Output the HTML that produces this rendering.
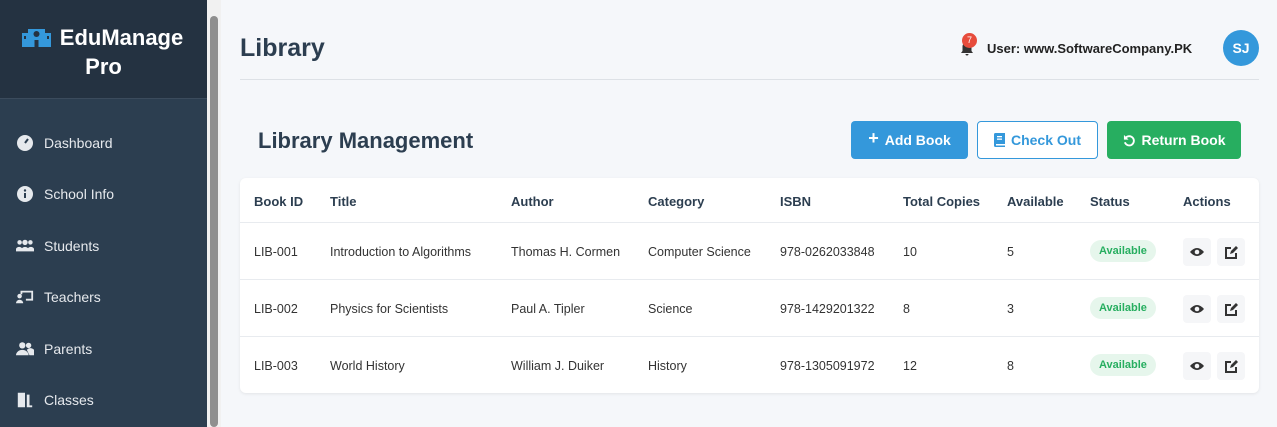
<!DOCTYPE html>
<html><head><meta charset="utf-8"><style>
*{box-sizing:border-box;margin:0;padding:0}
body{width:1277px;height:427px;overflow:hidden;background:#f5f7fa;font-family:"Liberation Sans",sans-serif;position:relative;color:#2c3e50}
.sb{position:absolute;left:0;top:0;width:207px;height:427px;background:#2c3e50}
.sbh{height:99px;background:#243241;border-bottom:1px solid #3b4b5c;color:#fff;font-weight:bold;font-size:22px;text-align:center;padding-top:23px;line-height:29px}
.menu{position:absolute;left:0;top:117px;width:207px}
.mi{height:51.5px;display:flex;align-items:center;padding-left:16px;color:#e6e9ed;font-size:14px}
.mi svg{width:18px;height:18px;margin-right:10px}
.scr{position:absolute;left:207px;top:0;width:14px;height:427px;background:#f1f1f1}
.thumb{position:absolute;left:210px;top:16px;width:8px;height:411px;background:#8f8f8f;border-radius:4px}
h1{position:absolute;left:240px;top:34px;font-size:25px;font-weight:bold}
.hr{position:absolute;left:240px;top:79px;width:1019px;height:1px;background:#dde1e6}
.user{position:absolute;left:987px;top:41px;font-size:13px;font-weight:bold;color:#222}
.av{position:absolute;left:1223px;top:30px;width:36px;height:36px;border-radius:50%;background:#3498db;color:#fff;font-weight:bold;font-size:14px;text-align:center;line-height:36px}
.badge{position:absolute;left:962px;top:33px;width:15px;height:15px;border-radius:50%;background:#e74c3c;color:#fff;font-size:9px;text-align:center;line-height:15px}
h2{position:absolute;left:258px;top:128px;font-size:22px;font-weight:bold}
.btn{position:absolute;top:121px;height:38px;border-radius:4px;font-size:14px;font-weight:bold;display:flex;align-items:center;justify-content:center;gap:6px}
.card{position:absolute;left:240px;top:178px;width:1019px;height:215px;background:#fff;border-radius:6px;box-shadow:0 1px 3px rgba(0,0,0,.08)}
.row{position:absolute;left:0;width:1019px;font-size:12.5px;color:#333}
.row span{position:absolute}
.hd{top:0;height:45px;border-bottom:1px solid #e8ebef;font-weight:bold;font-size:13px;color:#2c3e50}
.hd span{top:16px}
.r{height:57px;border-bottom:1px solid #e8ebef}
.r span{top:22px}
.pill{background:#e6f6ec;color:#27ae60;font-weight:bold;font-size:11px;border-radius:12px;padding:5px 9px;top:17px!important}
.ib{width:28px;height:28px;background:#f5f6f8;border-radius:4px;top:15px!important;display:flex;align-items:center;justify-content:center}
</style></head><body>
<div class="sb">
<div class="sbh"><svg style="position:absolute;left:22px;top:25px" width="29" height="22" viewBox="0 0 29 22"><path fill="#3498db" d="M6 4h17v18H6zM0 8h6v14H0zM23 8h6v14h-6z"/><circle cx="14.5" cy="9" r="3" fill="#243241"/><rect x="12.5" y="15" width="4" height="7" fill="#243241"/><rect x="2" y="11" width="2" height="3" fill="#243241"/><rect x="25" y="11" width="2" height="3" fill="#243241"/></svg><span style="padding-left:36px">EduManage</span><br>Pro</div>
<div class="menu">
<div class="mi"><svg viewBox="0 0 18 18"><circle cx="9" cy="9" r="8" fill="#e6e9ed"/><path d="M9 9l3-4" stroke="#2c3e50" stroke-width="2"/></svg>Dashboard</div>
<div class="mi"><svg viewBox="0 0 18 18"><circle cx="9" cy="9" r="8" fill="#e6e9ed"/><rect x="8" y="8" width="2" height="5" fill="#2c3e50"/><circle cx="9" cy="5.5" r="1.2" fill="#2c3e50"/></svg>School Info</div>
<div class="mi"><svg viewBox="0 0 20 18"><circle cx="10" cy="5" r="3" fill="#e6e9ed"/><circle cx="4" cy="5" r="2.5" fill="#e6e9ed"/><circle cx="16" cy="5" r="2.5" fill="#e6e9ed"/><path d="M5 15a5 5 0 0110 0zM0 12a4 4 0 017 0v3H0zM13 12a4 4 0 017 0v3h-7z" fill="#e6e9ed"/></svg>Students</div>
<div class="mi"><svg viewBox="0 0 20 18"><path d="M5 2h14v11h-8v-2h6V4H7v2H5z" fill="#e6e9ed"/><circle cx="4" cy="8" r="2.5" fill="#e6e9ed"/><path d="M0 16a4 4 0 018 0z" fill="#e6e9ed"/></svg>Teachers</div>
<div class="mi"><svg viewBox="0 0 20 18"><circle cx="7" cy="5" r="3.5" fill="#e6e9ed"/><circle cx="14" cy="5" r="3" fill="#e6e9ed"/><path d="M0 16a7 6 0 0114 0zM12 10a5 5 0 018 6h-5z" fill="#e6e9ed"/></svg>Parents</div>
<div class="mi"><svg viewBox="0 0 20 18"><path d="M2 1h8v16H2zM12 3h3v12h3v2h-6z" fill="#e6e9ed"/></svg>Classes</div>
</div></div>
<div class="scr"></div><div class="thumb"></div>
<h1>Library</h1>
<svg style="position:absolute;left:960px;top:41px" width="14" height="15" viewBox="0 0 14 15"><path d="M7 1a4.5 4.5 0 014.5 4.5V10l1.5 2H1l1.5-2V5.5A4.5 4.5 0 017 1zM5.5 13h3a1.5 1.5 0 01-3 0z" fill="#333"/></svg>
<div class="badge">7</div>
<div class="user">User: www.SoftwareCompany.PK</div>
<div class="av">SJ</div>
<div class="hr"></div>
<h2>Library Management</h2>
<div class="btn" style="left:851px;width:117px;background:#3498db;color:#fff"><b style="font-size:18px;margin-top:-3px">+</b>Add Book</div>
<div class="btn" style="left:977px;width:121px;border:1px solid #3498db;color:#3498db;background:#fff"><svg width="11" height="14" viewBox="0 0 11 14"><path d="M0 1.5A1.5 1.5 0 011.5 0H11v11H2v1.5h9V14H1.5A1.5 1.5 0 010 12.5z" fill="#3498db"/><rect x="3" y="3" width="5" height="1.3" fill="#fff"/><rect x="3" y="5.5" width="5" height="1.3" fill="#fff"/></svg>Check Out</div>
<div class="btn" style="left:1107px;width:134px;background:#27ae60;color:#fff"><svg width="13" height="13" viewBox="0 0 14 14"><path d="M3 4a5 5 0 11-1 5" fill="none" stroke="#fff" stroke-width="2"/><path d="M1 1v5h5z" fill="#fff"/></svg>Return Book</div>
<div class="card">
<div class="row hd"><span style="left:14px">Book ID</span><span style="left:90px">Title</span><span style="left:271px">Author</span><span style="left:408px">Category</span><span style="left:540px">ISBN</span><span style="left:663px">Total Copies</span><span style="left:767px">Available</span><span style="left:850px">Status</span><span style="left:943px">Actions</span></div>
<div class="row r" style="top:45px"><span style="left:14px">LIB-001</span><span style="left:90px">Introduction to Algorithms</span><span style="left:271px">Thomas H. Cormen</span><span style="left:408px">Computer Science</span><span style="left:540px">978-0262033848</span><span style="left:663px">10</span><span style="left:767px">5</span><span class="pill" style="left:850px">Available</span><span class="ib" style="left:943px"><svg width="14" height="10" viewBox="0 0 14 10"><path d="M0 5Q7-3 14 5Q7 13 0 5z" fill="#333"/><circle cx="7" cy="5" r="2.3" fill="#f5f6f8"/></svg></span><span class="ib" style="left:977px"><svg width="13" height="13" viewBox="0 0 13 13"><path d="M6 2H1v10h10V7" fill="none" stroke="#333" stroke-width="2"/><path d="M5 8l1-3 5-5 2 2-5 5z" fill="#333"/></svg></span></div>
<div class="row r" style="top:102px"><span style="left:14px">LIB-002</span><span style="left:90px">Physics for Scientists</span><span style="left:271px">Paul A. Tipler</span><span style="left:408px">Science</span><span style="left:540px">978-1429201322</span><span style="left:663px">8</span><span style="left:767px">3</span><span class="pill" style="left:850px">Available</span><span class="ib" style="left:943px"><svg width="14" height="10" viewBox="0 0 14 10"><path d="M0 5Q7-3 14 5Q7 13 0 5z" fill="#333"/><circle cx="7" cy="5" r="2.3" fill="#f5f6f8"/></svg></span><span class="ib" style="left:977px"><svg width="13" height="13" viewBox="0 0 13 13"><path d="M6 2H1v10h10V7" fill="none" stroke="#333" stroke-width="2"/><path d="M5 8l1-3 5-5 2 2-5 5z" fill="#333"/></svg></span></div>
<div class="row r" style="top:159px;border:none"><span style="left:14px">LIB-003</span><span style="left:90px">World History</span><span style="left:271px">William J. Duiker</span><span style="left:408px">History</span><span style="left:540px">978-1305091972</span><span style="left:663px">12</span><span style="left:767px">8</span><span class="pill" style="left:850px">Available</span><span class="ib" style="left:943px"><svg width="14" height="10" viewBox="0 0 14 10"><path d="M0 5Q7-3 14 5Q7 13 0 5z" fill="#333"/><circle cx="7" cy="5" r="2.3" fill="#f5f6f8"/></svg></span><span class="ib" style="left:977px"><svg width="13" height="13" viewBox="0 0 13 13"><path d="M6 2H1v10h10V7" fill="none" stroke="#333" stroke-width="2"/><path d="M5 8l1-3 5-5 2 2-5 5z" fill="#333"/></svg></span></div>
</div>
</body></html>
